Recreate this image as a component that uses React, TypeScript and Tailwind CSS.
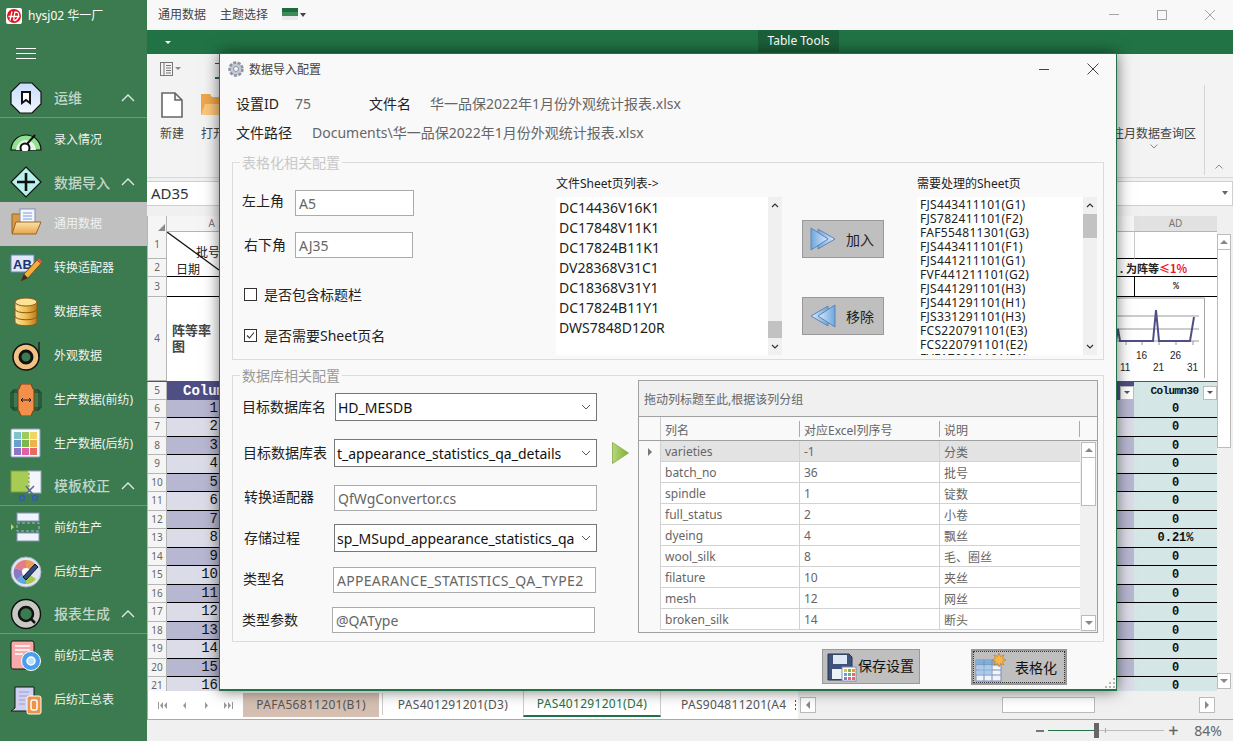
import React from 'react'

const dark = [true, false]
const numbers = Array.from({ length: 16 }, (_, i) => i + 1)

const sheetList = ['DC14436V16K1', 'DC17848V11K1', 'DC17824B11K1', 'DV28368V31C1', 'DC18368V31Y1', 'DC17824B11Y1', 'DWS7848D120R']
const pickedList = [
  'FJS443411101(G1)', 'FJS782411101(F2)', 'FAF554811301(G3)', 'FJS443411101(F1)', 'FJS441211101(G1)', 'FVF441211101(G2)',
  'FJS441291101(H3)', 'FJS441291101(H1)', 'FJS331291101(H3)', 'FCS220791101(E3)', 'FCS220791101(E2)', 'FVF170901101(E1)',
]
const gridRows = [
  ['varieties', '-1', '分类'],
  ['batch_no', '36', '批号'],
  ['spindle', '1', '锭数'],
  ['full_status', '2', '小卷'],
  ['dyeing', '4', '飘丝'],
  ['wool_silk', '8', '毛、圈丝'],
  ['filature', '10', '夹丝'],
  ['mesh', '12', '网丝'],
  ['broken_silk', '14', '断头'],
]

function Chevron() {
  return (
    <svg width="14" height="8" viewBox="0 0 14 8" fill="none" stroke="#e3ece6" strokeWidth="1.3" className="mr-[12px] ml-auto">
      <path d="M1 7l6-6 6 6" />
    </svg>
  )
}

function Logo() {
  return (
    <svg width="16" height="16" viewBox="0 0 16 16">
      <rect width="16" height="16" rx="2" fill="#fff" />
      <circle cx="8" cy="8" r="7" fill="#e0141c" />
      <path d="M2.5 8.5h11M6 3.5l-2 9M9 3.5l-1.500 9M9 4c3.500 0 4 2 3.500 4s-2 4.500-4.500 4.500" fill="none" stroke="#fff" strokeWidth="1.300" />
    </svg>
  )
}

const icons: Record<string, React.ReactNode> = {
  ops: (
    <svg width="32" height="32" viewBox="0 0 32 32">
      <defs>
        <linearGradient id="opsG" x1="0" y1="0" x2="0" y2="1">
          <stop offset="0" stopColor="#c6dcfb" />
          <stop offset="1" stopColor="#f3f7ff" />
        </linearGradient>
      </defs>
      <path d="M10 1h12l9 9v12l-9 9H10l-9-9V10z" fill="url(#opsG)" stroke="#111" strokeWidth="1.200" />
      <path d="M12 10h8v11l-4-3-4 3z" fill="#fff" stroke="#111" strokeWidth="2" />
    </svg>
  ),
  gauge: (
    <svg width="32" height="32" viewBox="0 0 32 32">
      <path d="M1 26a15 15 0 0 1 30 0z" fill="#8fe08f" stroke="#111" strokeWidth="1.200" />
      <path d="M6 26a10 10 0 0 1 20 0" fill="#e6f6e6" />
      <circle cx="15" cy="24" r="4.500" fill="#fff" stroke="#111" strokeWidth="2" />
      <path d="M17 20l8-9" stroke="#111" strokeWidth="2" />
      <rect x="0" y="27" width="32" height="3" fill="#3c7a50" />
    </svg>
  ),
  plus: (
    <svg width="32" height="32" viewBox="0 0 32 32">
      <path d="M16 1l15 15-15 15L1 16z" fill="#b8f0ee" stroke="#111" strokeWidth="1.200" />
      <path d="M16 7v18M7 16h18" stroke="#111" strokeWidth="2.600" />
    </svg>
  ),
  folder: (
    <svg width="32" height="32" viewBox="0 0 32 32">
      <defs>
        <linearGradient id="folderG" x1="0" y1="0" x2="0" y2="1">
          <stop offset="0" stopColor="#fbe3a8" />
          <stop offset="1" stopColor="#e7a54a" />
        </linearGradient>
      </defs>
      <path d="M2 6h9l2 3h11v16H2z" fill="#d99a45" stroke="#9a6526" />
      <rect x="10" y="1" width="15" height="17" fill="#f4f7ff" stroke="#7f8fb5" />
      <path d="M13 5h9M13 8h9M13 11h9" stroke="#7f9bd0" />
      <path d="M2 26l4-12h25l-5 12z" fill="url(#folderG)" stroke="#9a6526" />
    </svg>
  ),
  edit: (
    <svg width="32" height="32" viewBox="0 0 32 32">
      <rect x="1" y="3" width="23" height="17" fill="#dfe7fa" stroke="#6f82b3" />
      <text x="3" y="17" fontSize="13" fontWeight="700" fill="#1c2f6e" fontFamily="Liberation Sans, sans-serif">AB</text>
      <path d="M11 29l3-7 13-14 4 3.500L18 26z" fill="#f1ae3d" stroke="#7a4c1b" />
      <path d="M27 8l4 3.500 1-2-3-3z" fill="#e5574e" />
      <path d="M11 29l3-7 4 4z" fill="#33302c" />
    </svg>
  ),
  db: (
    <svg width="32" height="32" viewBox="0 0 32 32">
      <defs>
        <linearGradient id="dbG" x1="0" y1="0" x2="1" y2="0">
          <stop offset="0" stopColor="#fbe6a0" />
          <stop offset=".5" stopColor="#f1bf52" />
          <stop offset="1" stopColor="#b97a1c" />
        </linearGradient>
      </defs>
      <path d="M5 6v20c0 5 22 5 22 0V6z" fill="url(#dbG)" stroke="#8a5a14" />
      <ellipse cx="16" cy="6" rx="11" ry="4" fill="#fbe39a" stroke="#8a5a14" />
      <path d="M5 13c0 5 22 5 22 0M5 20c0 5 22 5 22 0" fill="none" stroke="#8a5a14" />
    </svg>
  ),
  ring: (
    <svg width="32" height="32" viewBox="0 0 32 32">
      <circle cx="16" cy="17" r="13" fill="#f2c184" stroke="#111" strokeWidth="1.500" />
      <circle cx="16" cy="17" r="6" fill="#3c7a50" stroke="#111" strokeWidth="3" />
      <path d="M29 2v15" stroke="#111" strokeWidth="1.200" />
    </svg>
  ),
  watch: (
    <svg width="32" height="32" viewBox="0 0 32 32">
      <path d="M3 6h26v20H3z" fill="none" stroke="#1b3a27" />
      <path d="M1 8h30v16H1z" fill="none" stroke="#1b3a27" />
      <path d="M11 0h10l2 5h1v22h-1l-2 5H11l-2-5H8V5h1z" fill="#f28f4b" stroke="#7a3f14" />
      <path d="M11 16h10M11 16l2-2M11 16l2 2M21 16l-2-2M21 16l-2 2" stroke="#1a1a1a" fill="none" />
    </svg>
  ),
  tiles: (
    <svg width="32" height="32" viewBox="0 0 32 32">
      <rect x="1" y="1" width="29" height="28" rx="1" fill="#f7f8fb" stroke="#8da0c0" />
      <rect x="4" y="4" width="7" height="7" fill="#7fc4c8" />
      <rect x="12" y="4" width="7" height="7" fill="#9ccb5e" />
      <rect x="20" y="4" width="7" height="7" fill="#efd566" />
      <rect x="4" y="12" width="7" height="7" fill="#6a9ed2" />
      <rect x="12" y="12" width="7" height="7" fill="#7ab84e" />
      <rect x="20" y="12" width="7" height="7" fill="#efb24e" />
      <rect x="4" y="20" width="7" height="7" fill="#8d76c2" />
      <rect x="12" y="20" width="7" height="7" fill="#e35da8" />
      <rect x="20" y="20" width="7" height="7" fill="#e46d62" />
    </svg>
  ),
  cut: (
    <svg width="32" height="32" viewBox="0 0 32 32">
      <rect x="18" y="1" width="13" height="22" fill="#f3f5fb" stroke="#9aa6be" />
      <rect x="1" y="1" width="18" height="21" fill="#a6cc55" stroke="#7f9f3b" />
      <path d="M19 1v22" stroke="#fff" strokeDasharray="2 2" />
      <path d="M24 16l-11 11M16 16l9 11" stroke="#55698f" strokeWidth="1.500" />
      <circle cx="12" cy="28" r="2.500" fill="none" stroke="#2c5fb0" strokeWidth="1.500" />
      <circle cx="25" cy="28" r="2.500" fill="none" stroke="#2c5fb0" strokeWidth="1.500" />
    </svg>
  ),
  layout: (
    <svg width="32" height="32" viewBox="0 0 32 32">
      <rect x="7" y="1" width="22" height="8" fill="#f0f3fb" stroke="#8296bd" />
      <rect x="7" y="11" width="22" height="8" fill="none" stroke="#a9bad8" strokeDasharray="3 2" />
      <rect x="7" y="21" width="22" height="8" fill="#f0f3fb" stroke="#8296bd" />
      <path d="M1 12l3 3-3 3z" fill="#c9d83a" />
    </svg>
  ),
  palette: (
    <svg width="32" height="32" viewBox="0 0 32 32">
      <circle cx="16" cy="16" r="15" fill="#dfe6f2" stroke="#a7b3c8" />
      <path d="M16 16L16 4a12 12 0 0 1 10 5z" fill="#ec9a5c" />
      <path d="M16 16L4.500 12A12 12 0 0 1 16 4z" fill="#e37e86" />
      <path d="M16 16L6.500 24A12 12 0 0 1 4.500 12z" fill="#8d76c2" />
      <path d="M16 16l0 12a12 12 0 0 1-9.500-4z" fill="#5da9dc" />
      <path d="M16 16l10 7a12 12 0 0 1-10 5z" fill="#a9c64e" />
      <circle cx="16" cy="16" r="4" fill="#fff" />
      <path d="M13 21L25 8l3 3-12 13z" fill="#2f4a80" stroke="#112" />
    </svg>
  ),
  search: (
    <svg width="32" height="32" viewBox="0 0 32 32">
      <circle cx="16" cy="16" r="14.500" fill="#c9c9c4" stroke="#111" strokeWidth="1.400" />
      <circle cx="16" cy="16" r="7" fill="#3c7a50" stroke="#111" strokeWidth="2.500" />
      <path d="M21 21l4 4" stroke="#111" strokeWidth="2.500" />
    </svg>
  ),
  report: (
    <svg width="32" height="32" viewBox="0 0 32 32">
      <rect x="1" y="1" width="23" height="28" rx="2" fill="#f8a9a9" stroke="#161616" />
      <path d="M5 6h15M5 10h15M5 14h8" stroke="#fff" strokeWidth="1.500" />
      <circle cx="21" cy="21" r="9.500" fill="#4aa0ea" stroke="#fff" />
      <circle cx="21" cy="21" r="4" fill="#bfe0fb" stroke="#fff" strokeWidth="1.500" />
    </svg>
  ),
  scroll: (
    <svg width="32" height="32" viewBox="0 0 32 32">
      <path d="M5 3h19v24H1l4-3z" fill="#d0d0f2" stroke="#161616" />
      <path d="M9 8h10M9 12h10M9 16h6M9 20h6" stroke="#9d9dc9" strokeWidth="1.200" />
      <rect x="17" y="12" width="14" height="18" rx="2" fill="#f0934a" stroke="#fff" />
      <rect x="21" y="16" width="6" height="10" rx="2" fill="none" stroke="#fff" strokeWidth="1.500" />
    </svg>
  ),
}

function NavHead({ icon, label, line = true }: { icon: string; label: string; line?: boolean }) {
  return (
    <div className={`flex items-center h-[40px] ${line ? 'border-b border-[#6c9a7a]' : ''}`}>
      <span className="w-[32px] ml-[10px]">{icons[icon]}</span>
      <span className="ml-[12px] text-[14px] text-[#c3d6c9] font-medium">{label}</span>
      <Chevron />
    </div>
  )
}

function NavItem({ icon, label, active }: { icon: string; label: string; active?: boolean }) {
  return (
    <div className={`flex items-center h-[44px] ${active ? 'bg-[#c0c0c0]' : ''}`}>
      <span className="w-[32px] ml-[10px]">{icons[icon]}</span>
      <span className="ml-[12px] text-[12px] text-[#eef3ef] whitespace-nowrap">{label}</span>
    </div>
  )
}

function Sidebar() {
  return (
    <div className="w-[147px] shrink-0 bg-[#3c7a50] flex flex-col">
      <div className="h-[30px] flex items-center pl-[6px] mt-[1px]">
        <Logo />
        <span className="ml-[6px] text-[12px] text-white">hysj02 华一厂</span>
      </div>
      <div className="h-[47px] pl-[16px] pt-[17px] flex flex-col gap-[4px]">
        <div className="w-[20px] h-px bg-white" />
        <div className="w-[20px] h-px bg-white" />
        <div className="w-[20px] h-px bg-white" />
      </div>
      <NavHead icon="ops" label="运维" />
      <NavItem icon="gauge" label="录入情况" />
      <NavHead icon="plus" label="数据导入" line={false} />
      <NavItem icon="folder" label="通用数据" active />
      <NavItem icon="edit" label="转换适配器" />
      <NavItem icon="db" label="数据库表" />
      <NavItem icon="ring" label="外观数据" />
      <NavItem icon="watch" label="生产数据(前纺)" />
      <NavItem icon="tiles" label="生产数据(后纺)" />
      <NavHead icon="cut" label="模板校正" />
      <NavItem icon="layout" label="前纺生产" />
      <NavItem icon="palette" label="后纺生产" />
      <NavHead icon="search" label="报表生成" />
      <NavItem icon="report" label="前纺汇总表" />
      <NavItem icon="scroll" label="后纺汇总表" />
    </div>
  )
}

function TopBar() {
  return (
    <div className="h-[30px] bg-[#f8f8f8] flex items-center text-[12px] text-[#444] pl-[11px]">
      <span>通用数据</span>
      <span className="ml-[14px]">主题选择</span>
      <span className="ml-[14px] mb-[2px] w-[16px] h-[12px] flex flex-col">
        <span className="h-[4px] bg-[#1c6b3c]" />
        <span className="h-[4px] bg-[#3f8a5c]" />
        <span className="h-[4px] bg-[#e9e9e9]" />
      </span>
      <span className="ml-[2px] mt-[1px] w-0 h-0 border-x-[3px] border-x-transparent border-t-[4px] border-t-[#444]" />
      <div className="ml-auto flex items-center gap-[38px] pr-[18px]">
        <span className="w-[10px] h-px bg-[#a5a5a5]" />
        <span className="w-[10px] h-[10px] border border-[#a5a5a5]" />
        <svg width="10" height="10" viewBox="0 0 10 10" stroke="#a5a5a5" strokeWidth="1">
          <path d="M0 0l10 10M10 0L0 10" />
        </svg>
      </div>
    </div>
  )
}

function GreenBar() {
  return (
    <div className="h-[24px] bg-[#217346] flex items-start pl-[18px]">
      <span className="mt-[11px] w-0 h-0 border-x-[3px] border-x-transparent border-t-[3px] border-t-white" />
      <div className="ml-[587px] w-[81px] h-[22px] bg-[#1b5f39] text-white text-[12px] flex items-center justify-center">
        Table Tools
      </div>
    </div>
  )
}

function Ribbon() {
  return (
    <div className="h-[124px] bg-[#f3f3f3] flex border-b border-[#d8d8d8]">
      <div className="pl-[13px] pt-[8px] w-[100px] shrink-0">
        <div className="flex items-center h-[14px]">
          <svg width="13" height="14" viewBox="0 0 13 14" fill="none" stroke="#777">
            <rect x=".5" y=".5" width="12" height="13" />
            <path d="M4 .5v13M6 3.500h5M6 6h5M6 8.500h5M6 11h5" />
          </svg>
          <span className="ml-[2px] w-0 h-0 border-x-[3px] border-x-transparent border-t-[3px] border-t-[#888]" />
          <span className="ml-[34px] w-[4px] h-[16px] mt-[4px] border-t border-[#444] border-b-2 border-b-[#217346]" />
        </div>
        <div className="flex mt-[16px] gap-[17px]">
          <div className="flex flex-col items-center w-[24px]">
            <svg width="22" height="26" viewBox="0 0 22 26" fill="#fff" stroke="#666" strokeWidth="1.600">
              <path d="M1 1h13l7 7v17H1zM14 1v7h7" />
            </svg>
            <span className="mt-[7px] text-[12px] text-[#444]">新建</span>
          </div>
          <div className="flex flex-col items-center w-[24px]">
            <svg width="24" height="26" viewBox="0 0 24 26">
              <path d="M0 2h9l2 3h11v18H0z" fill="#f0a54a" />
              <path d="M0 23l4-11h20l-4 11z" fill="#fbc67c" />
            </svg>
            <span className="mt-[7px] text-[12px] text-[#444]">打开</span>
          </div>
        </div>
      </div>
      <div className="ml-auto flex h-full">
        <div className="pt-[71px] flex flex-col items-center pr-[8px] text-[12px] text-[#444]">
          <span>往月数据查询区</span>
          <svg width="8" height="5" viewBox="0 0 8 5" fill="none" stroke="#888" className="mt-[1px]">
            <path d="M.5.5L4 4 7.500.5" />
          </svg>
        </div>
        <div className="w-px h-[90px] bg-[#d5d5d5] mt-[31px]" />
        <div className="w-[28px] flex justify-center pt-[110px]">
          <svg width="8" height="5" viewBox="0 0 8 5" fill="none" stroke="#888">
            <path d="M.5 4.500L4 1l3.500 3.500" />
          </svg>
        </div>
      </div>
    </div>
  )
}

function FormulaBar() {
  return (
    <div className="h-[38px] bg-[#f0f0f0] pt-[3px]">
      <div className="h-[25px] bg-white border-y border-r border-[#cfcfcf] flex items-center pl-[4px] text-[15px] text-[#333]">
        AD35
        <span className="ml-auto mr-[4px] w-0 h-0 border-x-[3px] border-x-transparent border-t-[4px] border-t-[#666]" />
      </div>
    </div>
  )
}

function DropBtn() {
  return (
    <span className="w-[14px] h-[14px] bg-white border border-[#bbb] flex items-center justify-center">
      <span className="w-0 h-0 border-x-[3px] border-x-transparent border-t-[3px] border-t-[#555]" />
    </span>
  )
}

function RowHdr({ n, h }: { n: number; h?: string }) {
  return (
    <div className={`w-[20px] shrink-0 bg-[#f5f5f5] border-r border-b border-[#b5b5b5] border-l flex items-center justify-center text-[10px] text-[#666] [font-family:'Noto_Sans',sans-serif] ${h ?? ''}`}>
      {n}
    </div>
  )
}

function SheetChart() {
  return (
    <svg width="100" height="84" viewBox="0 0 100 84" className="mr-[12px] shrink-0">
      <path d="M.5 1h99v80" fill="none" stroke="#a5a5a5" />
      <path d="M5 19h89M5 32h89M5 44h89M21 44v4M37 44v4M54 44v4M71 44v4M88 44v4" stroke="#999" fill="none" />
      <path d="M5 44h6l2-12 2 12h33l3-31 3 31 31 0 4-24" fill="none" stroke="#4f4f86" strokeWidth="2" />
      <text x="31" y="62" fontSize="10" fill="#222" fontFamily="Liberation Sans, sans-serif">16</text>
      <text x="65" y="62" fontSize="10" fill="#222" fontFamily="Liberation Sans, sans-serif">26</text>
      <text x="15" y="74" fontSize="10" fill="#222" fontFamily="Liberation Sans, sans-serif">11</text>
      <text x="48" y="74" fontSize="10" fill="#222" fontFamily="Liberation Sans, sans-serif">21</text>
      <text x="82" y="74" fontSize="10" fill="#222" fontFamily="Liberation Sans, sans-serif">31</text>
    </svg>
  )
}

function Sheet() {
  return (
    <div className="flex h-[476px] overflow-hidden bg-white [font-family:'Liberation_Mono',monospace]">
      <div className="flex-1 min-w-0 flex flex-col">
        <div className="h-[16px] flex text-[10px] text-[#777] [font-family:'Noto_Sans',sans-serif]">
          <div className="w-[20px] bg-[#f5f5f5] border-x border-[#b5b5b5] flex items-end justify-end p-[1px]">
            <span className="w-0 h-0 border-l-[7px] border-l-transparent border-b-[7px] border-b-[#8a8a8a]" />
          </div>
          <div className="w-[53px] bg-[#f5f5f5] border-b border-[#b5b5b5] text-right pr-[5px]">A</div>
          <div className="flex-1 bg-[#f5f5f5] border-b border-[#b5b5b5]" />
          <div className="w-[83px] bg-[#e1e1e1] border-b border-[#b5b5b5] text-center">AD</div>
        </div>
        <div className="flex h-[27px]">
          <RowHdr n={1} h="h-[27px]" />
          <div className="w-[53px] relative">
            <svg width="52" height="45" viewBox="0 0 52 45" className="absolute top-0 left-0 z-10">
              <path d="M0 0l52 38" stroke="#111" strokeWidth="1.300" />
            </svg>
            <span className="absolute left-[29px] top-[11px] text-[12px] text-[#222] [font-family:'Noto_Sans_CJK_SC',sans-serif]">批号</span>
          </div>
          <div className="flex-1 border-b border-black" />
          <div className="w-[83px] border-l border-[#c8c8c8] border-b border-b-black" />
        </div>
        <div className="flex h-[18px]">
          <RowHdr n={2} h="h-[18px]" />
          <div className="w-[53px] border-b border-black text-[12px] leading-[20px] pl-[9px] text-[#222] [font-family:'Noto_Sans_CJK_SC',sans-serif]">日期</div>
          <div className="flex-1 border-b border-black flex justify-end items-center text-[11px] font-bold text-[#222] pr-[30px] pt-[3px] [font-family:'Noto_Sans_CJK_SC',sans-serif]">
            <span>. 为阵等</span>
            <span className="text-[#f0141e]">≤1%</span>
          </div>
        </div>
        <div className="flex h-[20px]">
          <RowHdr n={3} h="h-[20px]" />
          <div className="w-[53px] border-b border-black" />
          <div className="flex-1 border-b border-black" />
          <div className="w-[83px] border-l border-black border-b border-b-black text-center text-[10px] font-bold text-[#333] pt-[2px]">%</div>
        </div>
        <div className="flex h-[84px]">
          <RowHdr n={4} h="h-[84px]" />
          <div className="flex-1 flex justify-between items-center">
            <div className="pl-[5px] pb-[2px] text-[13px] leading-[16px] font-bold text-[#444] [font-family:'Noto_Sans_CJK_SC',sans-serif]">
              阵等率
              <br />
              图
            </div>
            <SheetChart />
          </div>
        </div>
        <div className="flex h-[19px] border-t border-[#217346]">
          <RowHdr n={5} />
          <div className="w-[53px] bg-[#4f4f86] pl-[16px] text-[14px] font-bold text-white leading-[18px] whitespace-nowrap overflow-visible">Column1</div>
          <div className="flex-1 bg-[#4f4f86] flex justify-end items-end">
            <DropBtn />
          </div>
          <div className="w-[83px] bg-[#d5e6e6] relative flex items-center justify-center pt-[2px] pr-[2px] text-[11px] tracking-[-0.6px] font-bold text-[#111]">
            Column30
            <span className="absolute right-0 bottom-0">
              <DropBtn />
            </span>
          </div>
        </div>
        {numbers.map((n, i) => {
          const isDark = dark[i % 2]
          return (
            <div key={n} className={`flex shrink-0 ${isDark ? 'h-[18px]' : 'h-[19px]'}`}>
              <RowHdr n={n + 5} />
              <div className={`w-[53px] border-b border-black text-right pr-[2px] text-[14px] leading-[17px] text-[#111] overflow-hidden ${isDark ? 'bg-[#b7b7d2]' : 'bg-[#dcdce8]'}`}>
                {n}
              </div>
              <div className={`flex-1 border-b border-black ${isDark ? 'bg-[#b7b7d2]' : 'bg-[#dcdce8]'}`} />
              <div className="w-[83px] bg-[#d5e6e6] border-b border-black text-center text-[12px] leading-[19px] font-bold text-[#111]">
                {n === 8 ? '0.21%' : '0'}
              </div>
            </div>
          )
        })}
      </div>
      <div className="w-[16px] shrink-0 bg-[#f0f0f0] pt-[18px] flex flex-col pr-[2px]">
        <div className="h-[16px] bg-white border border-[#bbb] flex items-center justify-center">
          <span className="w-0 h-0 border-x-[4px] border-x-transparent border-b-[4px] border-b-[#888]" />
        </div>
        <div className="h-[198px] bg-white border-x border-b border-[#bbb]" />
        <div className="flex-1" />
        <div className="h-[16px] mb-[2px] bg-white border border-[#bbb] flex items-center justify-center">
          <span className="w-0 h-0 border-x-[4px] border-x-transparent border-t-[4px] border-t-[#888]" />
        </div>
      </div>
    </div>
  )
}

function NavTri({ dir }: { dir: 'first' | 'prev' | 'next' | 'last' }) {
  return (
    <svg width="9" height="7" viewBox="0 0 9 7" fill="#999">
      {dir === 'first' && <path d="M0 0h1v7H0zM5 0v7L2 3.500zM9 0v7L6 3.500z" />}
      {dir === 'prev' && <path d="M6 0v7L3 3.500z" />}
      {dir === 'next' && <path d="M3 0v7l3-3.500z" />}
      {dir === 'last' && <path d="M8 0h1v7H8zM0 0v7l3-3.500zM4 0v7l3-3.500z" />}
    </svg>
  )
}

function TabStrip() {
  return (
    <div className="h-[29px] bg-[#f0f0f0] border-b border-[#aaa] border-l text-[12px] tracking-[0.3px] text-[#555] flex items-start">
      <div className="w-[95px] h-[28px] bg-white flex items-center justify-around px-[4px]">
        <NavTri dir="first" />
        <NavTri dir="prev" />
        <NavTri dir="next" />
        <NavTri dir="last" />
      </div>
      <div className="h-[28px] bg-white flex items-start pt-[2px]">
        <div className="w-[136px] h-[24px] bg-[#d4bfb2] text-center leading-[24px]">PAFA56811201(B1)</div>
        <div className="w-[1px] h-[22px] ml-[3px] bg-[#ccc]" />
        <div className="w-[140px] text-center leading-[24px]">PAS401291201(D3)</div>
        <div className="w-[138px] h-[26px] -mt-[2px] bg-white border-l border-r border-[#ccc] border-b-2 border-b-[#217346] text-center text-[#217346] leading-[26px]">PAS401291201(D4)</div>
        <div className="w-[132px] pl-[20px] leading-[24px] whitespace-nowrap">PAS904811201(A4</div>
        <div className="w-[5px] h-[24px] flex flex-col items-center justify-center gap-[2px]">
          <span className="w-px h-[2px] bg-[#555]" />
          <span className="w-px h-[2px] bg-[#555]" />
          <span className="w-px h-[2px] bg-[#555]" />
        </div>
      </div>
      <div className="flex-1 h-[24px] mt-[2px] bg-[#f0f0f0] flex items-center pl-[2px]">
        <span className="w-[16px] h-[16px] bg-white border border-[#bbb] flex items-center justify-center">
          <span className="w-0 h-0 border-y-[4px] border-y-transparent border-r-[4px] border-r-[#888]" />
        </span>
        <span className="ml-[186px] w-[93px] h-[16px] bg-white border border-[#bbb]" />
        <span className="ml-auto mr-[18px] w-[16px] h-[16px] bg-white border border-[#bbb] flex items-center justify-center">
          <span className="w-0 h-0 border-y-[4px] border-y-transparent border-l-[4px] border-l-[#888]" />
        </span>
      </div>
    </div>
  )
}

function StatusBar() {
  return (
    <div className="flex-1 bg-[#f0f0f0] flex items-center justify-end pr-[11px] text-[14px] text-[#666]">
      <span className="w-[8px] h-[2px] bg-[#777]" />
      <div className="ml-[4px] w-[116px] h-[15px] relative flex items-center">
        <div className="w-[46px] h-px bg-[#217346]" />
        <div className="w-[70px] h-px bg-[#bdbdbd]" />
        <span className="absolute left-[46px] top-0 w-[5px] h-[15px] bg-[#666]" />
        <span className="absolute left-[57px] top-[5px] w-px h-[5px] bg-[#aaa]" />
      </div>
      <span className="ml-[4px] text-[18px] leading-[21px] font-medium text-[#666] w-[9px]">+</span>
      <span className="ml-[17px] leading-[21px]">84%</span>
    </div>
  )
}

function Scrollbar({ thumbClass }: { thumbClass: string }) {
  return (
    <div className="w-[14px] bg-[#f0f0f0] flex flex-col items-center shrink-0">
      <svg width="8" height="16" viewBox="0 0 8 16" fill="none" stroke="#333" strokeWidth="1.200">
        <path d="M1 10l3-3 3 3" />
      </svg>
      <div className="flex-1 w-full">
        <div className={`w-full bg-[#c2c2c2] ${thumbClass}`} />
      </div>
      <svg width="8" height="16" viewBox="0 0 8 16" fill="none" stroke="#333" strokeWidth="1.200">
        <path d="M1 6l3 3 3-3" />
      </svg>
    </div>
  )
}

function TextInput({ value, className }: { value: string; className: string }) {
  return (
    <div className={`bg-white border border-[#ababab] flex items-center pl-[3px] text-[14px] text-[#666] whitespace-nowrap ${className}`}>
      {value}
    </div>
  )
}

function Select({ value }: { value: string }) {
  return (
    <div className="h-[28px] flex-1 bg-white border border-[#777] flex items-center pl-[2px] text-[14px] text-[#111] whitespace-nowrap overflow-hidden">
      {value}
      <svg width="10" height="6" viewBox="0 0 10 6" fill="none" stroke="#555" className="ml-auto mr-[5px] shrink-0">
        <path d="M1 1l4 4 4-4" />
      </svg>
    </div>
  )
}

function CheckRow({ label, checked, className }: { label: string; checked?: boolean; className: string }) {
  return (
    <div className={`flex items-center text-[14px] text-[#222] ${className}`}>
      <span className="w-[13px] h-[13px] border border-[#333] bg-white flex items-center justify-center">
        {checked && (
          <svg width="11" height="11" viewBox="0 0 11 11" fill="none" stroke="#333" strokeWidth="1.100">
            <path d="M2 5.500l2.500 2.500L9 2.500" />
          </svg>
        )}
      </span>
      <span className="ml-[7px]">{label}</span>
    </div>
  )
}

function SideBtn({ label, back, className }: { label: string; back?: boolean; className?: string }) {
  return (
    <div className={`w-[82px] h-[38px] bg-[#bfbfbf] border border-[#999] flex items-center pl-[7px] text-[14px] text-[#222] ${className ?? ''}`}>
      <svg width="26" height="24" viewBox="0 0 26 24" className={back ? 'rotate-180' : ''}>
        <defs>
          <linearGradient id={back ? 'arrB' : 'arrA'} x1="0" y1="0" x2="1" y2="0">
            <stop offset="0" stopColor="#6fa6de" />
            <stop offset="1" stopColor="#d9e9f9" />
          </linearGradient>
        </defs>
        <path d="M8 2l17 10L8 22z" fill={`url(#${back ? 'arrB' : 'arrA'})`} stroke="#5d86b5" />
        <path d="M1 1l17 11L1 23z" fill={`url(#${back ? 'arrB' : 'arrA'})`} stroke="#5d86b5" />
      </svg>
      <span className="ml-[10px]">{label}</span>
    </div>
  )
}

function GroupBox({ legend, legendClass, className, children }: { legend: string; legendClass: string; className: string; children: React.ReactNode }) {
  return (
    <div className={`relative border border-[#dcdcdc] ${className}`}>
      <span className={`absolute -top-[10px] left-[7px] bg-[#f9f9f9] px-[2px] text-[14px] leading-[20px] ${legendClass}`}>{legend}</span>
      {children}
    </div>
  )
}

function FormRow({ label, labelClass, rowClass, children }: { label: string; labelClass: string; rowClass: string; children: React.ReactNode }) {
  return (
    <div className={`flex items-center ${rowClass}`}>
      <span className={`text-[14px] text-[#222] shrink-0 ${labelClass}`}>{label}</span>
      {children}
    </div>
  )
}

function ColumnGrid() {
  return (
    <div className="w-[460px] h-[253px] border border-[#a0a0a0] flex flex-col text-[12px] text-[#666] overflow-hidden">
      <div className="h-[36px] shrink-0 bg-[#f0f0f0] border-b border-[#a0a0a0] flex items-center pl-[5px] pt-[2px]">拖动列标题至此,根据该列分组</div>
      <div className="h-[24px] shrink-0 flex bg-[#f9f9f9] border-b border-[#a0a0a0] items-center">
        <div className="w-[22px] h-full border-r border-[#ccc]" />
        <div className="w-[139px] pl-[4px] border-r border-[#aaa] h-[16px] leading-[19px]">列名</div>
        <div className="w-[140px] pl-[4px] border-r border-[#aaa] h-[16px] leading-[19px]">对应Excel列序号</div>
        <div className="w-[140px] pl-[4px] border-r border-[#aaa] h-[16px] leading-[19px]">说明</div>
      </div>
      <div className="flex-1 min-h-0 flex">
        <div className="w-[442px] min-w-0">
          {gridRows.map((row, i) => (
            <div key={row[0]} className={`flex h-[21px] border-b border-[#d2d2d2] ${i === 0 ? 'bg-[#e3e3e3]' : 'bg-white'}`}>
              <div className="w-[22px] -mb-px bg-[#f9f9f9] border-r border-[#d2d2d2] flex items-center justify-center">
                {i === 0 && <span className="w-0 h-0 border-y-[4px] border-y-transparent border-l-[4px] border-l-[#777]" />}
              </div>
              <div className="w-[139px] pl-[4px] border-r border-[#d2d2d2] leading-[22px]">{row[0]}</div>
              <div className="w-[140px] pl-[4px] border-r border-[#d2d2d2] leading-[22px]">{row[1]}</div>
              <div className="w-[140px] pl-[4px] leading-[23px]">{row[2]}</div>
            </div>
          ))}
        </div>
        <div className="w-[17px] shrink-0 bg-[#f0f0f0] p-[1px] flex flex-col">
          <div className="h-[16px] bg-white border border-[#bbb] flex items-center justify-center">
            <span className="w-0 h-0 border-x-[4px] border-x-transparent border-b-[4px] border-b-[#888]" />
          </div>
          <div className="h-[48px] bg-white border-x border-b border-[#bbb]" />
          <div className="flex-1" />
          <div className="h-[16px] bg-white border border-[#bbb] flex items-center justify-center">
            <span className="w-0 h-0 border-x-[4px] border-x-transparent border-t-[4px] border-t-[#888]" />
          </div>
        </div>
      </div>
    </div>
  )
}

function ConfigDialog() {
  return (
    <div className="absolute left-[219px] top-[53px] w-[898px] h-[638px] bg-[#f9f9f9] border border-b-2 border-[#217346] shadow-[0_0_14px_rgba(0,0,0,0.55)] flex flex-col text-[14px] z-20">
      <div className="h-[30px] shrink-0 flex items-center pl-[8px] text-[12px] text-[#444]">
        <svg width="16" height="16" viewBox="0 0 16 16">
          <circle cx="8" cy="8" r="6.500" fill="#c3c8d2" stroke="#8c93a3" strokeDasharray="3 1.500" strokeWidth="2.500" />
          <circle cx="8" cy="8" r="2.500" fill="#f4f5f8" stroke="#8c93a3" />
        </svg>
        <span className="ml-[5px] pt-[2px]">数据导入配置</span>
        <div className="ml-auto flex items-center gap-[38px] pr-[17px]">
          <span className="w-[10px] h-px bg-[#444]" />
          <svg width="12" height="12" viewBox="0 0 12 12" stroke="#444" strokeWidth="1">
            <path d="M.5.5l11 11M11.500.5l-11 11" />
          </svg>
        </div>
      </div>
      <div className="h-[20px] mt-[9px] flex items-center pl-[16px] text-[#222] shrink-0">
        <span className="w-[59px]">设置ID</span>
        <span className="w-[74px] text-[#666]">75</span>
        <span className="w-[61px]">文件名</span>
        <span className="text-[#666]">华一品保2022年1月份外观统计报表.xlsx</span>
      </div>
      <div className="h-[20px] mt-[9px] flex items-center pl-[16px] text-[#222] shrink-0">
        <span className="w-[76px]">文件路径</span>
        <span className="text-[#666]">Documents\华一品保2022年1月份外观统计报表.xlsx</span>
      </div>

      <GroupBox legend="表格化相关配置" legendClass="text-[#c8c8c8]" className="ml-[12px] mr-[12px] mt-[20px] h-[198px] flex shrink-0">
        <div className="w-[323px] shrink-0 pl-[9px] pt-[27px]">
          <FormRow label="左上角" labelClass="w-[53px] pb-[6px]" rowClass="h-[26px]">
            <TextInput value="A5" className="w-[119px] h-[26px]" />
          </FormRow>
          <FormRow label="右下角" labelClass="w-[51px] ml-[2px] pb-[2px]" rowClass="h-[26px] mt-[16px]">
            <TextInput value="AJ35" className="w-[118px] h-[26px]" />
          </FormRow>
          <CheckRow label="是否包含标题栏" className="ml-[2px] mt-[26px] h-[20px]" />
          <CheckRow label="是否需要Sheet页名" checked className="ml-[2px] mt-[21px] h-[20px]" />
        </div>
        <div className="w-[226px] shrink-0 flex flex-col">
          <div className="h-[34px] pt-[13px] text-[12px] text-[#222] leading-[16px] whitespace-nowrap">文件Sheet页列表-&gt;</div>
          <div className="h-[158px] bg-white flex overflow-hidden">
            <div className="flex-1 pl-[3px] pt-[1px] text-[14px] leading-[20px] text-[#222]">
              {sheetList.map(s => (
                <div key={s}>{s}</div>
              ))}
            </div>
            <Scrollbar thumbClass="h-[17px] mt-[108px]" />
          </div>
        </div>
        <div className="w-[135px] shrink-0 pl-[20px] pt-[57px]">
          <SideBtn label="加入" />
          <SideBtn label="移除" back className="mt-[39px]" />
        </div>
        <div className="w-[180px] shrink-0 flex flex-col">
          <div className="h-[34px] pt-[13px] text-[12px] text-[#222] leading-[16px] whitespace-nowrap">需要处理的Sheet页</div>
          <div className="h-[158px] bg-white flex overflow-hidden">
            <div className="flex-1 min-w-0 pl-[3px] pt-[1px] text-[12px] tracking-[0.3px] leading-[14px] text-[#222] overflow-hidden">
              {pickedList.map(s => (
                <div key={s}>{s}</div>
              ))}
            </div>
            <Scrollbar thumbClass="h-[24px] mt-[1px]" />
          </div>
        </div>
      </GroupBox>

      <GroupBox legend="数据库相关配置" legendClass="text-[#999]" className="ml-[12px] mr-[12px] mt-[15px] h-[267px] flex shrink-0">
        <div className="w-[405px] shrink-0 pl-[9px] pt-[17px]">
          <FormRow label="目标数据库名" labelClass="w-[93px] pb-[2px]" rowClass="h-[28px]">
            <div className="flex w-[262px]"><Select value="HD_MESDB" /></div>
          </FormRow>
          <FormRow label="目标数据库表" labelClass="w-[91px] ml-[1px] pb-[2px]" rowClass="h-[28px] mt-[18px]">
            <div className="flex w-[263px]"><Select value="t_appearance_statistics_qa_details" /></div>
            <svg width="17" height="22" viewBox="0 0 17 22" className="ml-[15px] shrink-0">
              <defs>
                <linearGradient id="goG" x1="0" y1="0" x2="1" y2="0">
                  <stop offset="0" stopColor="#b8d77a" />
                  <stop offset="1" stopColor="#7fae33" />
                </linearGradient>
              </defs>
              <path d="M.5.5L16.500 11 .5 21.500z" fill="url(#goG)" stroke="#92b45c" />
            </svg>
          </FormRow>
          <FormRow label="转换适配器" labelClass="w-[90px] ml-[2px] pb-[4px]" rowClass="h-[26px] mt-[18px]">
            <TextInput value="QfWgConvertor.cs" className="w-[263px] h-[26px]" />
          </FormRow>
          <FormRow label="存储过程" labelClass="w-[90px] ml-[2px] pb-[2px]" rowClass="h-[28px] mt-[13px]">
            <div className="flex w-[263px]"><Select value="sp_MSupd_appearance_statistics_qa" /></div>
          </FormRow>
          <FormRow label="类型名" labelClass="w-[90px] ml-[1px] pb-[4px]" rowClass="h-[26px] mt-[15px]">
            <TextInput value="APPEARANCE_STATISTICS_QA_TYPE2" className="w-[263px] h-[26px] overflow-hidden tracking-[0.3px]" />
          </FormRow>
          <FormRow label="类型参数" labelClass="w-[90px] pb-[2px]" rowClass="h-[26px] mt-[14px]">
            <TextInput value="@QAType" className="w-[263px] h-[26px]" />
          </FormRow>
        </div>
        <div className="pt-[4px]">
          <ColumnGrid />
        </div>
      </GroupBox>

      <div className="flex-1 flex items-start pl-[602px] pt-[7px] relative">
        <div className="w-[98px] h-[35px] bg-[#bfbfbf] border border-[#999] flex items-center pl-[4px] text-[14px] text-[#111]">
          <svg width="30" height="30" viewBox="0 0 30 30" className="shrink-0">
            <path d="M1 2h21l3 3v23H1z" fill="#3f5478" stroke="#26344e" />
            <rect x="6" y="3" width="14" height="9" fill="#dfe8f6" />
            <rect x="5" y="17" width="15" height="10" fill="#eef2f9" />
            <rect x="15" y="15" width="14" height="14" fill="#fff" stroke="#7d8fb5" />
            <rect x="17" y="17" width="3" height="3" fill="#e9c23c" />
            <rect x="21" y="17" width="3" height="3" fill="#7fb54a" />
            <rect x="25" y="17" width="3" height="3" fill="#e9983c" />
            <rect x="17" y="21" width="3" height="3" fill="#5ba6d8" />
            <rect x="21" y="21" width="3" height="3" fill="#6bb36b" />
            <rect x="25" y="21" width="3" height="3" fill="#e36a5b" />
            <rect x="17" y="25" width="3" height="3" fill="#8d76c2" />
            <rect x="21" y="25" width="3" height="3" fill="#e35da8" />
            <rect x="25" y="25" width="3" height="3" fill="#e36a5b" />
          </svg>
          <span className="ml-[1px] pb-[2px] whitespace-nowrap">保存设置</span>
        </div>
        <div className="ml-[51px] w-[96px] h-[36px] bg-[#bfbfbf] border-2 border-[#999] flex items-center pl-[2px] text-[14px] text-[#111] relative">
          <div className="absolute inset-0 border border-dotted border-[#333]" />
          <svg width="32" height="30" viewBox="0 0 32 30" className="shrink-0">
            <rect x="1" y="8" width="25" height="21" fill="#f1f5fb" stroke="#7d8fb5" />
            <rect x="1" y="8" width="25" height="5" fill="#7fb0dc" />
            <path d="M1 13h25M1 18h25M1 23h25M9 8v21M17 8v21" stroke="#7d8fb5" />
            <rect x="2" y="14" width="15" height="9" fill="#8db9e0" opacity=".7" />
            <path d="M24 1l1.500 3.500L29 3l-1.500 3.500L31 8l-3.500 1.500L29 13l-3.500-1.500L24 15l-1.500-3.500L19 13l1.500-3.500L17 8l3.500-1.500L19 3l3.500 1.500z" fill="#f5b54a" stroke="#b97a1c" strokeWidth=".6" />
          </svg>
          <span className="ml-[8px] whitespace-nowrap">表格化</span>
        </div>
        <svg width="12" height="12" viewBox="0 0 12 12" fill="#b5b5b5" className="absolute right-0 bottom-0">
          <rect x="9" y="1" width="2" height="2" />
          <rect x="5" y="5" width="2" height="2" />
          <rect x="9" y="5" width="2" height="2" />
          <rect x="1" y="9" width="2" height="2" />
          <rect x="5" y="9" width="2" height="2" />
          <rect x="9" y="9" width="2" height="2" />
        </svg>
      </div>
    </div>
  )
}

export default function App() {
  return (
    <div className="relative w-[1233px] h-[741px] overflow-hidden flex [font-family:'Noto_Sans','Noto_Sans_CJK_SC',sans-serif]">
      <Sidebar />
      <div className="flex-1 min-w-0 flex flex-col">
        <TopBar />
        <GreenBar />
        <Ribbon />
        <FormulaBar />
        <Sheet />
        <TabStrip />
        <StatusBar />
      </div>
      <ConfigDialog />
    </div>
  )
}
